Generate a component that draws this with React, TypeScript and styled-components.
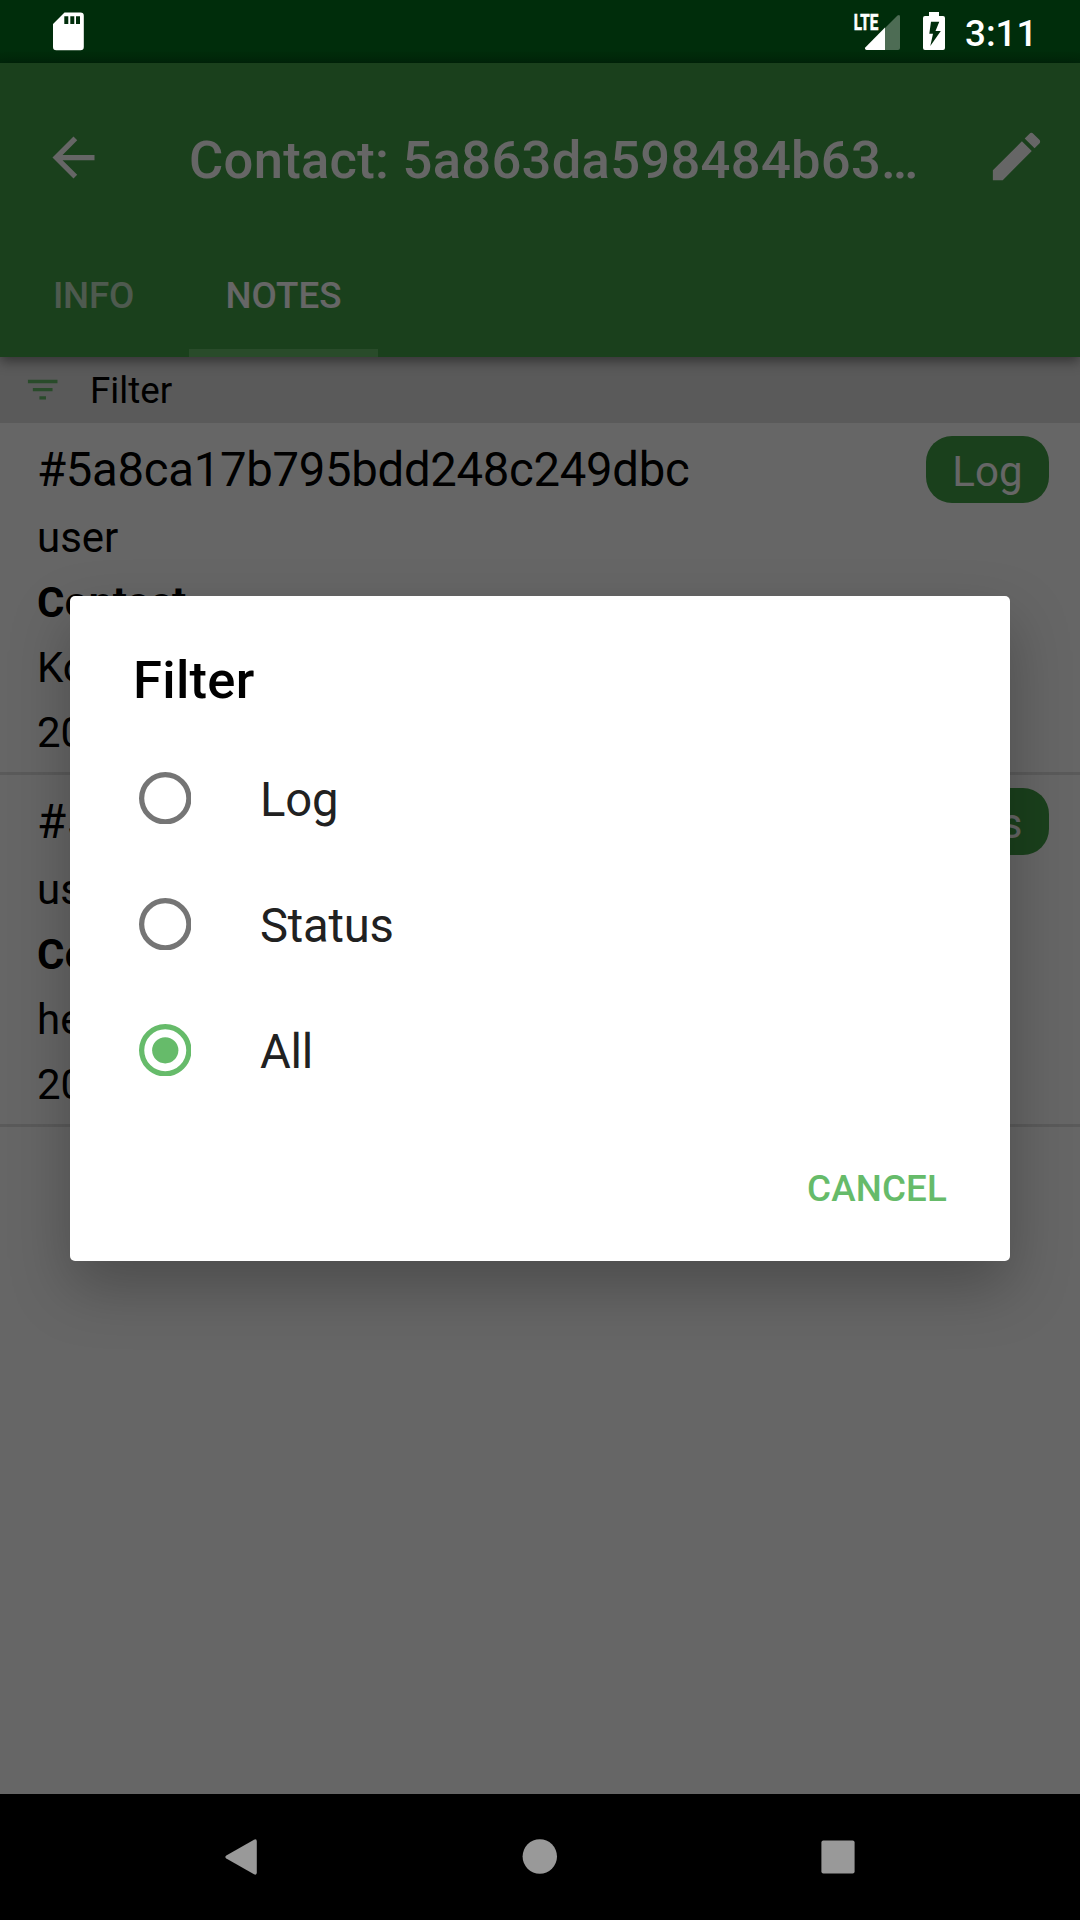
import React, { useState } from "react";
import styled, { createGlobalStyle } from "styled-components";

const GlobalStyle = createGlobalStyle`
  * { box-sizing: border-box; }
  body { margin: 0; background: #000; }
`;

const Screen = styled.div`
  width: 1080px;
  height: 1920px;
  display: flex;
  flex-direction: column;
  overflow: hidden;
  font-family: Roboto, "Noto Sans", sans-serif;
  font-size: 42px;
  color: #000;
`;

const StatusBar = styled.header`
  height: 63px;
  flex: none;
  display: flex;
  align-items: flex-start;
  padding: 0 42px 0 52px;
  background: linear-gradient(#002d0b 0, #002d0b 50px, #00260a 63px);
  color: #fff;
`;

const StatusIcons = styled.div`
  display: flex;
  margin-left: auto;
`;

const Clock = styled.time`
  width: 73px;
  margin-left: 20px;
  font-size: 36.75px;
  font-weight: 500;
  line-height: 67px;
  white-space: nowrap;
`;

const AppWindow = styled.div`
  position: relative;
  flex: 1;
  display: flex;
  flex-direction: column;
  background: #fff;
`;

const AppBar = styled.div`
  position: relative;
  z-index: 1;
  height: 294px;
  flex: none;
  display: flex;
  flex-direction: column;
  justify-content: space-between;
  background: #43a047;
  color: #fff;
  box-shadow: 0 4px 12px rgba(0, 0, 0, 0.45);
`;

const Toolbar = styled.div`
  display: flex;
  align-items: center;
  height: 189px;
  padding: 0 32px 0 42px;
`;

const EditAction = styled.span`
  display: flex;
  margin-bottom: 2px;
`;

const Title = styled.h1`
  flex: 1;
  margin: 4px 60px 0 84px;
  font-size: 52.5px;
  font-weight: 500;
  line-height: 64px;
  letter-spacing: 0.3px;
  white-space: nowrap;
`;

const Tabs = styled.nav`
  display: flex;
  height: 105px;
`;

const Tab = styled.button<{ $active?: boolean }>`
  display: flex;
  justify-content: center;
  width: 189px;
  padding: ${(p) => (p.$active ? "3px 0 0" : "3px 2px 0 0")};
  border: 0;
  border-bottom: 8px solid ${(p) => (p.$active ? "#66bb6a" : "transparent")};
  background: none;
  font: 500 36.75px/81px Roboto, "Noto Sans", sans-serif;
  letter-spacing: ${(p) => (p.$active ? "0" : "-0.2px")};
  color: ${(p) => (p.$active ? "#fff" : "rgba(255, 255, 255, 0.7)")};
`;

const FilterBar = styled.div`
  height: 66px;
  flex: none;
  display: flex;
  align-items: center;
  gap: 27.6px;
  padding-left: 23px;
  background: #e0e0e0;
  font-size: 36.75px;
`;

const NoteRow = styled.article`
  display: flex;
  justify-content: space-between;
  align-items: flex-start;
  height: 352px;
  padding: 13px 31px 0 37px;
  border-bottom: 3px solid #e0e0e0;
`;

const NoteLine = styled.div<{ $bold?: boolean }>`
  font-weight: ${(p) => (p.$bold ? 700 : 400)};
  letter-spacing: ${(p) => (p.$bold ? "0.3px" : "0")};
  line-height: 65px;
`;

const NoteTitle = styled.div`
  font-size: 47.25px;
  line-height: 69px;
  letter-spacing: -0.28px;
`;

const Badge = styled.span`
  height: 67px;
  padding: 0 26.5px 0 26.3px;
  border-radius: 26px;
  background: #43a047;
  color: #fff;
  line-height: 71px;
`;

const Scrim = styled.div`
  position: absolute;
  inset: 0;
  z-index: 2;
  display: flex;
  align-items: center;
  justify-content: center;
  background: rgba(0, 0, 0, 0.6);
`;

const Dialog = styled.section`
  width: 940px;
  height: 665px;
  display: flex;
  flex-direction: column;
  padding: 53px 63px 0;
  border-radius: 5px;
  background: #fff;
  box-shadow: 0 26px 60px rgba(0, 0, 0, 0.26);
`;

const DialogTitle = styled.h2`
  margin: 0 0 23px;
  font-size: 52.5px;
  font-weight: 500;
  line-height: 63px;
  letter-spacing: 0.3px;
`;

const Option = styled.label`
  display: flex;
  align-items: center;
  gap: 69px;
  height: 126px;
  padding-left: 5.5px;
  font-size: 47.25px;
  letter-spacing: -0.25px;
  color: #212121;
`;

const OptionText = styled.span`
  padding-top: 4px;
`;

const HiddenRadio = styled.input`
  display: none;
`;

const RadioMark = styled.svg<{ $on: boolean }>`
  width: 52.5px;
  height: 52.5px;
  color: ${(p) => (p.$on ? "#66bb6a" : "#757575")};
`;

const CancelButton = styled.button`
  align-self: flex-end;
  margin-top: 52px;
  padding: 0;
  border: 0;
  background: none;
  font: 500 36.75px/48px Roboto, "Noto Sans", sans-serif;
  letter-spacing: 0.15px;
  color: #66bb6a;
`;

const NavBar = styled.footer`
  height: 126px;
  flex: none;
  display: flex;
  justify-content: space-between;
  align-items: center;
  padding: 0 210px;
  background: #000;
`;

type IconProps = { size: number; d: string; color?: string };
const MaterialIcon = ({ size, d, color = "currentColor" }: IconProps) => (
  <svg width={size} height={size} viewBox="0 0 24 24" fill={color}>
    <path d={d} />
  </svg>
);

const BACK = "M20 11H7.83l5.59-5.59L12 4l-8 8 8 8 1.41-1.41L7.83 13H20v-2z";
const EDIT =
  "M3 17.25V21h3.75L17.81 9.94l-3.75-3.75L3 17.25zM20.71 7.04c.39-.39.39-1.02 0-1.41l-2.34-2.34c-.39-.39-1.02-.39-1.41 0l-1.83 1.83 3.75 3.75 1.83-1.83z";
const FILTER = "M10 18h4v-2h-4v2zM3 6v2h18V6H3zm3 7h12v-2H6v2z";

const SdCard = () => (
  <svg width="34" height="63" viewBox="52 0 34 63">
    <path
      fill="#fff"
      fillRule="evenodd"
      d="M64.500 12.500H80.500Q83.800 12.500 83.800 15.800V47Q83.800 50.300 80.500 50.300H56.300Q53 50.300 53 47V24ZM64.300 16.300V24H68.300V16.300ZM70.300 16.300V24H74.300V16.300ZM76 16.300V24H80V16.300Z"
    />
  </svg>
);

const Signal = () => (
  <svg width="92" height="63" viewBox="853 0 92 63" fill="#fff">
    <text
      x="853.800"
      y="30"
      fontSize="22.500"
      fontWeight="700"
      stroke="#fff"
      strokeWidth="0.700"
      textLength="24.500"
      lengthAdjust="spacingAndGlyphs"
    >
      LTE
    </text>
    <path opacity="0.3" d="M885 28V50H898Q900 50 900 48V16.500Q900 14 897.500 15.500Z" />
    <path d="M885 27.500V50H866.500Q864 49.500 865.500 47.300Z" />
    <path
      fillRule="evenodd"
      d="M929 12H939V16H943Q945 16 945 18V48Q945 50 943 50H925Q923 50 923 48V18Q923 16 925 16H929ZM931 21.700L929.300 33.700H933L930.300 46L940.800 31H935.500L939.300 21.700Z"
    />
  </svg>
);

const notes = [
  { id: "#5a8ca17b795bdd248c249dbc", kind: "Log", text: "Kontakt", date: "2018-02-20" },
  { id: "#5a8ca0f2795bdd248c249dbb", kind: "Status", text: "hello", date: "2018-02-20" },
];
const options = ["Log", "Status", "All"];

export default function App() {
  const [selected, setSelected] = useState("All");
  return (
    <Screen>
      <GlobalStyle />
      <StatusBar>
        <SdCard />
        <StatusIcons>
          <Signal />
          <Clock>3:11</Clock>
        </StatusIcons>
      </StatusBar>
      <AppWindow>
        <AppBar>
          <Toolbar>
            <MaterialIcon size={63} d={BACK} />
            <Title>Contact: 5a863da598484b63…</Title>
            <EditAction>
              <MaterialIcon size={63} d={EDIT} />
            </EditAction>
          </Toolbar>
          <Tabs>
            <Tab>INFO</Tab>
            <Tab $active>NOTES</Tab>
          </Tabs>
        </AppBar>
        <FilterBar>
          <MaterialIcon size={39.4} d={FILTER} color="#66bb6a" />
          <span>Filter</span>
        </FilterBar>
        {notes.map((n) => (
          <NoteRow key={n.id}>
            <div>
              <NoteTitle>{n.id}</NoteTitle>
              <NoteLine>user</NoteLine>
              <NoteLine $bold>Contact</NoteLine>
              <NoteLine>{n.text}</NoteLine>
              <NoteLine>{n.date}</NoteLine>
            </div>
            <Badge>{n.kind}</Badge>
          </NoteRow>
        ))}
        <Scrim>
          <Dialog role="dialog">
            <DialogTitle>Filter</DialogTitle>
            {options.map((o) => (
              <Option key={o}>
                <HiddenRadio
                  type="radio"
                  name="filter"
                  checked={selected === o}
                  onChange={() => setSelected(o)}
                />
                <RadioMark $on={selected === o} viewBox="0 0 20 20">
                  <circle cx="10" cy="10" r="9" fill="none" stroke="currentColor" strokeWidth="2" />
                  {selected === o && <circle cx="10" cy="10" r="5" fill="currentColor" />}
                </RadioMark>
                <OptionText>{o}</OptionText>
              </Option>
            ))}
            <CancelButton>CANCEL</CancelButton>
          </Dialog>
        </Scrim>
      </AppWindow>
      <NavBar>
        <svg width="63" height="63" viewBox="210 1826 63 63" fill="#999">
          <path d="M226.300 1855.500L254 1839.700Q256.800 1838.500 256.800 1841.500V1872.500Q256.800 1875.500 254 1874.300L226.300 1858.500Q224.300 1857 226.300 1855.500Z" />
        </svg>
        <svg width="63" height="63" viewBox="508.500 1826 63 63" fill="#999">
          <circle cx="539.300" cy="1856.500" r="17.200" />
        </svg>
        <svg width="63" height="63" viewBox="807 1826 63 63" fill="#999">
          <rect x="821.400" y="1840.400" width="33.200" height="33.200" rx="2" />
        </svg>
      </NavBar>
    </Screen>
  );
}
